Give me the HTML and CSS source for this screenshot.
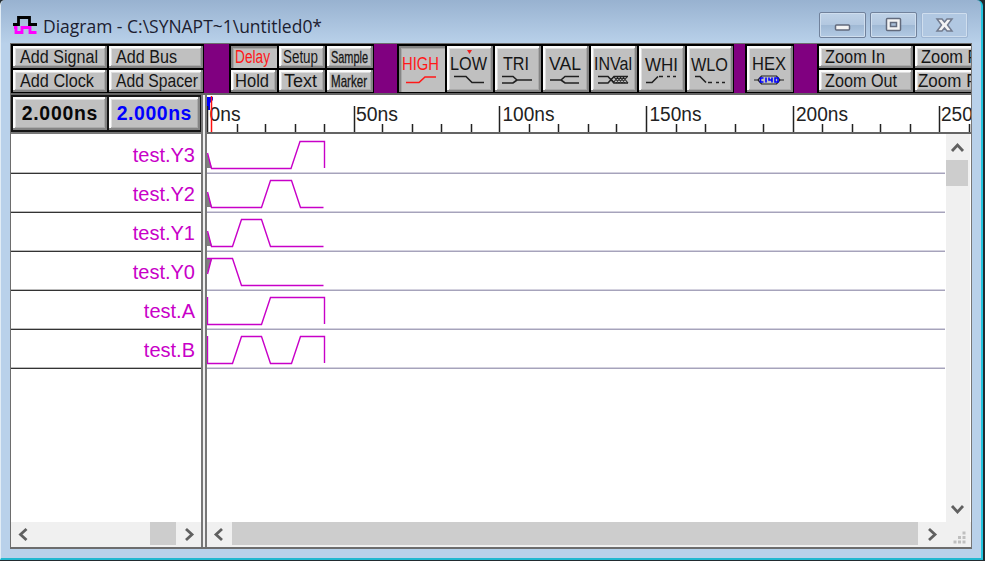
FILE: index.html
```html
<!DOCTYPE html>
<html lang="en">
<head>
<meta charset="utf-8">
<title>Diagram</title>
<link rel="stylesheet" href="styles.css">
</head>
<body>
<div class="window">
  <header class="titlebar">
    <svg class="app-icon" width="26" height="20" viewBox="12 15 26 20"><path d="M13 24.500h5.500v-7h11v7H37" fill="none" stroke="#000" stroke-width="2.800"/><path d="M14 27.500h2v5h6v-5h8v5h6.500" fill="none" stroke="#f0f" stroke-width="2.800"/></svg>
    <svg class="title" width="290" height="32" viewBox="42 8 290 32"><text x="43" y="33" textLength="279" lengthAdjust="spacingAndGlyphs">Diagram - C:\SYNAPT~1\untitled0*</text></svg>
    <div class="caption">
      <button class="cap"><svg width="45" height="24" viewBox="0 0 45 24"><rect x="15.500" y="12" width="14" height="5" rx="1" fill="#f4f4f4" stroke="#626a7c" stroke-width="1.500"/></svg></button>
      <button class="cap"><svg width="45" height="24" viewBox="0 0 45 24"><rect x="15.500" y="5.500" width="14" height="12" rx="1" fill="#f4f4f4" stroke="#626a7c" stroke-width="1.500"/><rect x="19.500" y="9.500" width="6" height="4" fill="#a9bfd8" stroke="#626a7c" stroke-width="1.500"/></svg></button>
      <button class="cap close"><svg width="45" height="24" viewBox="0 0 45 24"><path d="M15 6h5l2.500 3 2.500-3h5l-4.500 6 4.500 6h-5l-2.500-3-2.500 3h-5l4.500-6z" fill="#f4f4f4" stroke="#727b8e" stroke-width="1.500"/></svg></button>
    </div>
  </header>
  <main class="client">
    <nav class="toolbar">
      <div class="group add">
        <button class="btn"><svg viewBox="13 46 94 22"><text x="20" y="63" textLength="78" lengthAdjust="spacingAndGlyphs">Add Signal</text></svg></button>
        <button class="btn"><svg viewBox="109 46 94 22"><text x="116" y="63" textLength="61" lengthAdjust="spacingAndGlyphs">Add Bus</text></svg></button>
        <button class="btn"><svg viewBox="13 70 94 22"><text x="20" y="87" textLength="74" lengthAdjust="spacingAndGlyphs">Add Clock</text></svg></button>
        <button class="btn"><svg viewBox="109 70 94 22"><text x="116" y="87" textLength="82" lengthAdjust="spacingAndGlyphs">Add Spacer</text></svg></button>
      </div>
      <div class="group mode">
        <button class="btn on"><svg viewBox="231 46 46 22"><text x="235" y="63" textLength="35" lengthAdjust="spacingAndGlyphs">Delay</text></svg></button>
        <button class="btn"><svg viewBox="279 46 46 22"><text x="283" y="63" textLength="35" lengthAdjust="spacingAndGlyphs">Setup</text></svg></button>
        <button class="btn"><svg viewBox="327 46 46 22"><text class="small" x="331" y="63" textLength="37" lengthAdjust="spacingAndGlyphs">Sample</text></svg></button>
        <button class="btn"><svg viewBox="231 70 46 22"><text x="235" y="87" textLength="34" lengthAdjust="spacingAndGlyphs">Hold</text></svg></button>
        <button class="btn"><svg viewBox="279 70 46 22"><text x="284" y="87" textLength="33" lengthAdjust="spacingAndGlyphs">Text</text></svg></button>
        <button class="btn"><svg viewBox="327 70 46 22"><text class="small" x="331" y="87" textLength="36" lengthAdjust="spacingAndGlyphs">Marker</text></svg></button>
      </div>
      <div class="group wave">
        <button class="btn on"><svg viewBox="399 46 46 46"><text x="402" y="70" textLength="37" lengthAdjust="spacingAndGlyphs">HIGH</text><path d="M406 82.500h13l6-5.500h11"/></svg></button>
        <button class="btn"><svg viewBox="447 46 46 46"><text x="450" y="70" textLength="37" lengthAdjust="spacingAndGlyphs">LOW</text><path d="M454 76.500h12l6 6h12"/><path class="mark" d="M467 50h5l-2.500 4z"/></svg></button>
        <button class="btn"><svg viewBox="495 46 46 46"><text x="503" y="70" textLength="26" lengthAdjust="spacingAndGlyphs">TRI</text><path d="M502 76.500h11l4 3.500h15M502 83h11l4-3"/></svg></button>
        <button class="btn"><svg viewBox="543 46 46 46"><text x="549" y="70" textLength="32" lengthAdjust="spacingAndGlyphs">VAL</text><path d="M550 80h11l4-3.500h14M561 80l4 3h14"/></svg></button>
        <button class="btn"><svg viewBox="591 46 46 46"><text x="594" y="70" textLength="38" lengthAdjust="spacingAndGlyphs">INVal</text><path d="M598 76.500h10l6 6.500h14M598 83h10l6-6.500h14"/><path class="hatch" d="M614 77l5 6M617 77l5 6M620 77l5 6M623 77l5 6M612 80l2 3M618 77l-5 6M621 77l-5 6M624 77l-5 6M627 77l-5 6"/></svg></button>
        <button class="btn"><svg viewBox="639 46 46 46"><text x="645" y="71" textLength="33" lengthAdjust="spacingAndGlyphs">WHI</text><path d="M646 82.500h6l6-6M659 76.500h4m4 0h3m3 0h3"/></svg></button>
        <button class="btn"><svg viewBox="687 46 46 46"><text x="691" y="71" textLength="37" lengthAdjust="spacingAndGlyphs">WLO</text><path d="M695 76.500h5l6 6M708 82.500h4m4 0h3m3 0h3"/></svg></button>
      </div>
      <div class="group hex">
        <button class="btn"><svg viewBox="747 46 46 46"><text x="752" y="70" textLength="34" lengthAdjust="spacingAndGlyphs">HEX</text><path class="outline" d="M754 80h4l3.500-4h15l3.500 4h4M758 80l3.500 4h15l3.500-4"/><path class="digits" d="M763.500 78h-3v4h3M766 77.500v5M769 77.500v2.500h3m0-2.500v5M775 78v4h3v-4z"/></svg></button>
      </div>
      <div class="group zoom">
        <button class="btn"><svg viewBox="819 46 94 22"><text x="825" y="63" textLength="60" lengthAdjust="spacingAndGlyphs">Zoom In</text></svg></button>
        <button class="btn"><svg viewBox="915 46 94 22"><text x="921" y="63" textLength="73" lengthAdjust="spacingAndGlyphs">Zoom Full</text></svg></button>
        <button class="btn"><svg viewBox="819 70 94 22"><text x="825" y="87" textLength="72" lengthAdjust="spacingAndGlyphs">Zoom Out</text></svg></button>
        <button class="btn"><svg viewBox="915 70 94 22"><text x="918" y="87" textLength="67" lengthAdjust="spacingAndGlyphs">Zoom Fit</text></svg></button>
      </div>
    </nav>
    <section class="panes">
      <div class="names">
        <div class="times">
          <button class="btn"><svg viewBox="13 97 94 34"><text class="time" x="20.500" y="121" textLength="78">2.000ns</text></svg></button>
          <button class="btn"><svg viewBox="109 97 91 34"><text class="time blue" x="115.500" y="121" textLength="77">2.000ns</text></svg></button>
        </div>
        <ul class="signals">
          <li>test.Y3</li><li>test.Y2</li><li>test.Y1</li><li>test.Y0</li><li>test.A</li><li>test.B</li>
        </ul>
        <div class="hscroll">
          <svg class="arrow" width="24" height="25" viewBox="0 0 24 25"><path d="M15.500 7l-6 5.500 6 5.500"/></svg>
          <span class="track"></span><span class="thumb"></span>
          <svg class="arrow" width="25" height="25" viewBox="0 0 25 25"><path d="M10 7l6 5.500-6 5.500"/></svg>
        </div>
      </div>
      <div class="splitter"></div>
      <div class="view">
        <svg class="ruler" width="764" height="37" viewBox="207 95 764 37">
          <path class="flag" d="M206 97h7v3l-3 3v7h-4z"/>
          <path class="ticks" d="M207.500 106v26M354.500 106v26M499.500 106v26M646.500 106v26M793.500 106v26M939.500 106v26"/>
          <path class="ticks" d="M237.500 124v8M265.500 124v8M295.500 124v8M324.500 124v8M382.500 124v8M412.500 124v8M441.500 124v8M471.500 124v8M529.500 124v8M558.500 124v8M588.500 124v8M616.500 124v8M676.500 124v8M705.500 124v8M735.500 124v8M763.500 124v8M822.500 124v8M852.500 124v8M880.500 124v8M910.500 124v8M969.500 124v8"/>
          <text x="209.500" y="121" textLength="31" lengthAdjust="spacingAndGlyphs">0ns</text>
          <text x="356" y="121" textLength="42" lengthAdjust="spacingAndGlyphs">50ns</text>
          <text x="502.500" y="121" textLength="52" lengthAdjust="spacingAndGlyphs">100ns</text>
          <text x="649.500" y="121" textLength="52" lengthAdjust="spacingAndGlyphs">150ns</text>
          <text x="796" y="121" textLength="52" lengthAdjust="spacingAndGlyphs">200ns</text>
          <text x="941" y="121" textLength="52" lengthAdjust="spacingAndGlyphs">250ns</text>
          <path class="cursor" d="M211.500 96v36"/>
        </svg>
        <div class="plot">
          <div class="rows">
            <div class="row"><svg viewBox="207 135 738 38"><path class="unknown" d="M207 153v15h5z"/><path d="M207.500 153l4 15.500H291l9-27h24.500V168"/></svg></div>
            <div class="row"><svg viewBox="207 135 738 38"><path class="unknown" d="M207 153v15h5z"/><path d="M207.500 153l4 15.500H261.500l9-27H291.500l9 27H323.500"/></svg></div>
            <div class="row"><svg viewBox="207 135 738 38"><path class="unknown" d="M207 153v15h5z"/><path d="M207.500 153l4 15.500H232.500l9-27H261.500l9 27H323.500"/></svg></div>
            <div class="row"><svg viewBox="207 135 738 38"><path class="unknown" d="M207 142v15l5-15z"/><path d="M207.500 157l4-15.500M207 141.500H232.500l9 27H323.500"/></svg></div>
            <div class="row"><svg viewBox="207 135 738 38"><path d="M207.500 141v27.500H261.500l9-27H324.500V168"/></svg></div>
            <div class="row"><svg viewBox="207 135 738 38"><path d="M207.500 141v27.500H232.500l9-27H261.500l9 27H291.500l9-27H324.500V168"/></svg></div>
          </div>
          <div class="vscroll">
            <svg class="arrow" width="24" height="26" viewBox="0 0 24 26"><path d="M6 17l5.500-6 5.500 6"/></svg>
            <span class="thumb"></span><span class="track"></span>
            <svg class="arrow" width="24" height="26" viewBox="0 0 24 26"><path d="M6 10l5.500 6 5.500-6"/></svg>
          </div>
        </div>
        <div class="hscroll wide">
          <svg class="arrow" width="25" height="25" viewBox="0 0 25 25"><path d="M15 7l-6 5.500 6 5.500"/></svg>
          <span class="thumb"></span>
          <svg class="arrow" width="28" height="25" viewBox="0 0 28 25"><path d="M11 7l6 5.500-6 5.500"/></svg>
          <svg class="grip" width="25" height="25" viewBox="946 523 25 25"><path d="M962.500 532.500h3v3h-3zM958 537h3v3h-3zM962.500 537h3v3h-3zM953.500 541.500h3v3h-3zM958 541.500h3v3h-3zM962.500 541.500h3v3h-3z"/></svg>
        </div>
      </div>
    </section>
  </main>
</div>
</body>
</html>
```
FILE: styles.css
```css
* { box-sizing: border-box; }
html, body { margin: 0; width: 985px; height: 561px; overflow: hidden; background: #222b30; }
button { margin: 0; padding: 0; border: 0; border-radius: 0; }
svg { display: block; }
.window {
  width: 983px; height: 560px; display: flex; flex-direction: column;
  background: linear-gradient(to bottom, #98b2d0 0, #b9d1ea 44px, #b9d1ea 100%);
  border: solid; border-width: 0 2px 2px 1px; border-color: #000 #22c5e0 #22b8d0 #e2edf6;
  border-radius: 5px 6px 0 0;
  font-family: "Liberation Sans", Arial, sans-serif;
}
.titlebar { height: 43px; flex: none; display: flex; align-items: flex-start; padding: 0 13px 0 11px; }
.app-icon { margin-top: 15px; margin-right: 4px; }
.title { margin-top: 8px; }
.title text { font: 19px "Open Sans", "Noto Sans", sans-serif; fill: #1c2030; }
.caption { display: flex; gap: 4px; margin: 12px 0 0 auto; }
.cap {
  width: 47px; height: 26px; border: 1px solid #71829c; border-radius: 2px;
  background: linear-gradient(#bfd2e7 0, #b3c8e0 48%, #9fb8d4 50%, #b3cae4 100%);
  box-shadow: inset 0 0 0 1px #cfdeee;
}
.cap.close { border-color: #9fb6d3; background: #b1c8e2; }
.client {
  margin-left: 9px; width: 962px; height: 506px; border: 1px solid #6d6d6d;
  border-bottom-width: 2px; border-right-color: #777; display: flex; flex-direction: column;
  overflow: hidden; background: #fff;
}
.toolbar { display: flex; height: 49px; flex: none; background: #800080; overflow: hidden; }
.group { display: grid; gap: 2px; padding: 2px 1px 1px 2px; background: #000; flex: none; grid-template-rows: 22px 22px; }
.add { grid-template-columns: 94px 94px; width: 193px; }
.mode { grid-template-columns: repeat(3, 46px); margin-left: 25px; }
.wave, .hex { grid-template-rows: 46px; }
.wave { grid-template-columns: repeat(7, 46px); margin-left: 23px; }
.hex { grid-template-columns: 46px; margin-left: 11px; }
.zoom { grid-template-columns: 94px 94px; margin-left: 23px; }
.btn {
  background: #c0c0c0; overflow: hidden;
  box-shadow: inset -2px -2px #848484, inset 2px 2px #fbfbfb, inset -3px -3px #aaa, inset 3px 3px #dedede;
}
.btn svg { width: 100%; height: 100%; }
.btn text { font: 18px "Liberation Sans", Arial, sans-serif; fill: #161616; }
.btn text.small { font-size: 17px; stroke: #161616; stroke-width: .3; }
.btn path { fill: none; stroke: #202020; stroke-width: 1.6; }
.btn .mark { fill: #f02020; stroke: none; }
.btn .hatch { stroke-width: 1.1; }
.btn .outline { stroke-width: 1.2; }
.btn .digits { stroke: #0000ff; stroke-width: 1.6; }
.btn.on { box-shadow: inset 2px 2px #858585, inset 3px 3px #a8a8a8; }
.btn.on text { fill: #ff1818; }
.btn.on path { stroke: #ff1818; }
.btn .time { font-size: 20px; font-weight: bold; fill: #080808; }
.btn .time.blue { fill: #0000ff; }
.panes { display: flex; height: 454px; border-top: 2px solid #646464; }
.names { width: 190px; display: flex; flex-direction: column; }
.times {
  display: grid; grid-template-columns: 94px 91px; gap: 2px; padding: 2px 1px 2px 2px;
  height: 37px; background: #151515;
}
.signals { list-style: none; margin: 0; padding: 1px 0 0; flex: 1; border-top: 2px solid #777; }
.signals li {
  height: 39px; border-bottom: 1px solid #333; box-shadow: inset 0 -1px #bbb;
  padding-right: 6px; text-align: right; font-size: 20px; line-height: 40px; color: #c800c8;
}
.splitter { width: 6px; border: solid #777; border-width: 0 2px; background: #efefef; }
.view { width: 764px; display: flex; flex-direction: column; }
.ruler { height: 37px; background: #fff; }
.ruler text { font-size: 19.5px; fill: #222; }
.flag { fill: #0000ff; }
.ticks { stroke: #222; stroke-width: 1.5; }
.cursor { stroke: #ff1010; stroke-width: 1.5; }
.plot { flex: 1; display: flex; border-top: 2px solid #646464; }
.rows { width: 738px; padding-top: 1px; }
.row { height: 39px; border-bottom: 1px solid #a6a3bb; box-shadow: inset 0 -1px #d4d2df; }
.row svg { width: 738px; height: 38px; }
.row path { fill: none; stroke: #c800c8; stroke-width: 1.4; }
.row .unknown { fill: #808080; stroke: none; }
.vscroll { width: 24px; margin-left: 1px; display: flex; flex-direction: column; background: #f0f0f0; }
.vscroll .thumb { height: 26px; width: 22px; background: #cdcdcd; }
.vscroll .track { flex: 1; }
.hscroll { height: 25px; flex: none; display: flex; background: #f0f0f0; }
.hscroll .thumb { width: 26px; height: 23px; background: #cdcdcd; }
.hscroll .track { flex: 1; }
.hscroll.wide .thumb { flex: 1; }
.arrow path { fill: none; stroke: #606060; stroke-width: 2.8; }
.grip path { fill: #bfbfbf; }
```
